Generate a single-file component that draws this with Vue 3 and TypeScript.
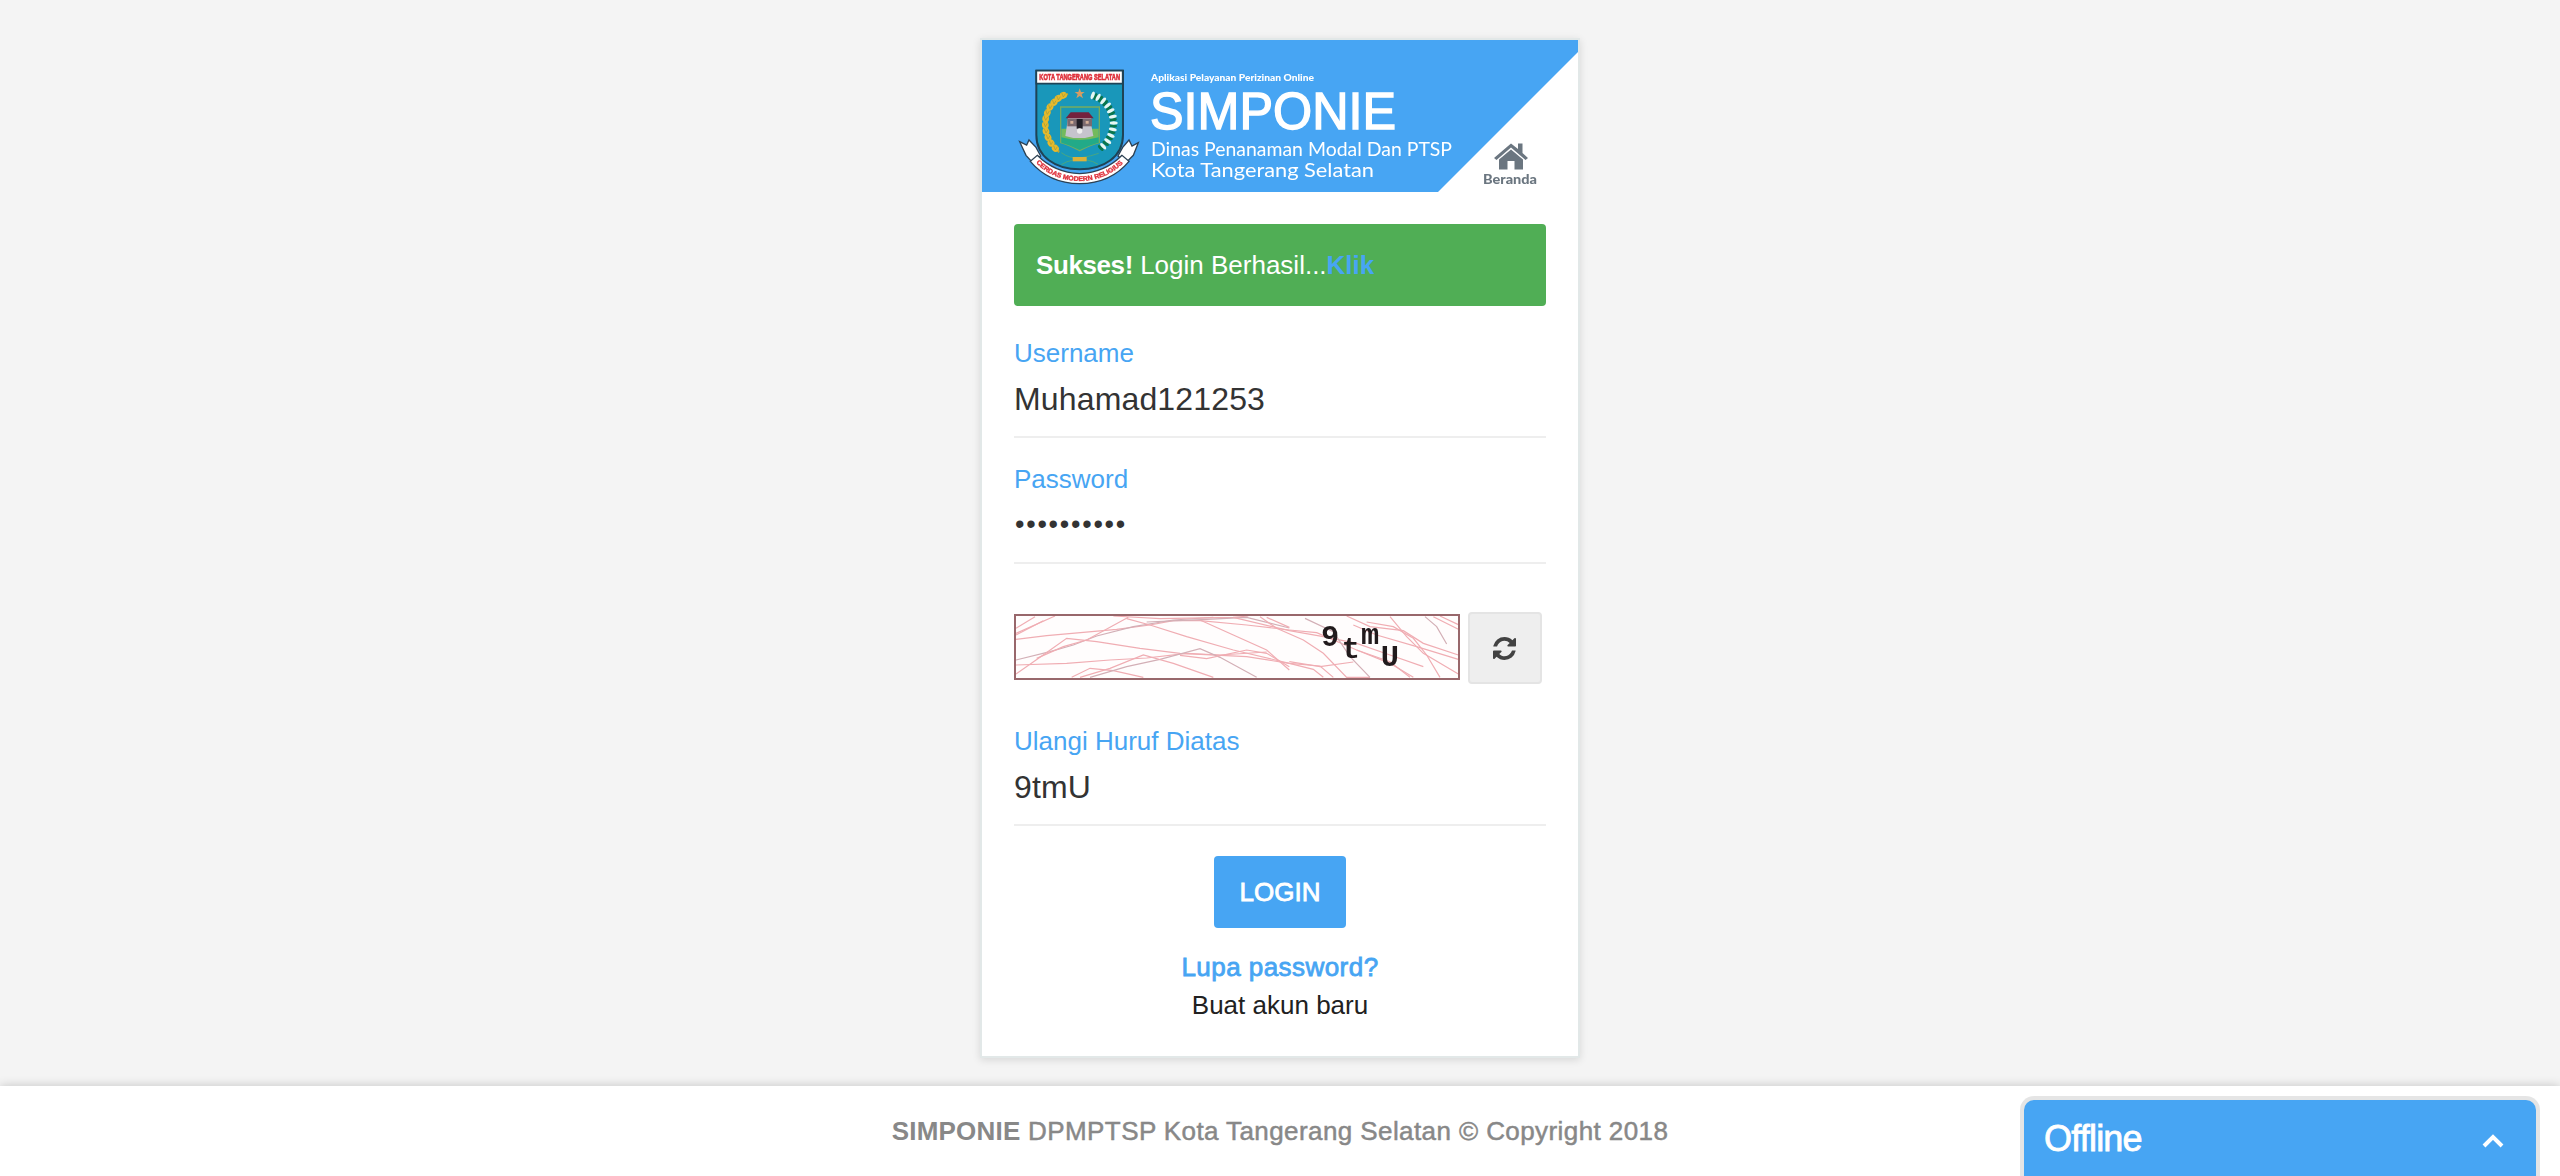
<script setup lang="ts">
import { ref } from 'vue'

const username = ref('Muhamad121253')
const password = ref('tangsel123')
const captcha = ref('9tmU')

interface Leaf {
  x: number
  y: number
  r: number
}

// Wheat ears on the left of the crest and cotton leaves on the right
const wheat: Leaf[] = [
  { x: 160, y: 136, r: 65 }, { x: 145, y: 145, r: 55 }, { x: 132, y: 157, r: 45 },
  { x: 120, y: 171, r: 30 }, { x: 112, y: 188, r: 18 }, { x: 107, y: 206, r: 8 },
  { x: 106, y: 225, r: -5 }, { x: 108, y: 244, r: -15 }, { x: 114, y: 262, r: -25 },
  { x: 123, y: 279, r: -35 }, { x: 136, y: 295, r: -45 },
]
const cotton: Leaf[] = [
  { x: 250, y: 137, r: 20 }, { x: 266, y: 143, r: 30 }, { x: 281, y: 154, r: 40 },
  { x: 294, y: 168, r: 52 }, { x: 303, y: 184, r: 65 }, { x: 309, y: 202, r: 78 },
  { x: 311, y: 221, r: 90 }, { x: 308, y: 240, r: 102 }, { x: 302, y: 258, r: 115 },
  { x: 292, y: 275, r: 125 }, { x: 278, y: 290, r: 138 },
]

const noise: string[] = [
  '48,85 105,50', '48,100 165,48', '48,105 130,62',
  '48,118 140,107 250,97 350,88 450,75 520,62 600,62 740,75 868,90 950,98 1070,150 1170,185 1230,232',
  '48,180 150,155 220,135 290,108 400,80 520,60 640,52',
  '48,222 120,172 200,115 290,125 420,145 540,160 740,170 868,190 960,198 1000,232',
  '110,175 190,140 260,120 385,52',
  '48,195 200,190 330,180 440,174 560,160 660,165 800,156',
  '215,232 270,205 340,212 430,232',
  '270,232 380,200 480,178 600,146 660,172 770,232',
  '240,232 330,205 430,165 520,190 640,232',
  '380,56 450,75 560,110 700,150 868,190 940,208 970,232',
  '600,60 700,105 800,150 868,210',
  '340,48 480,56 700,52 745,48',
  '440,66 620,58 740,52 868,84',
  '780,50 830,85 910,120 970,160 1040,232 1110,232',
  '700,52 868,92 970,110 1070,130 1170,165 1270,200',
  '800,52 868,82', '540,166 620,176 740,150 800,160 868,200',
  '915,55 1000,95 1050,170 1110,232',
  '1040,48 1110,80 1210,92 1270,130 1375,165',
  '1060,75 1130,105 1250,140 1375,178',
  '1100,66 1180,80 1240,115 1280,165 1320,232',
  '1170,50 1220,110 1270,160 1375,222',
  '1275,50 1310,80 1340,132', '1300,50 1375,88', '1320,48 1375,74',
  '868,185 960,200 1060,186', '1070,150 1170,190 1240,232',
]
</script>

<template>
  <div class="page">
    <main class="card">
      <svg class="banner" viewBox="0 0 596 152">
        <rect width="596" height="152" fill="#47a5f3" />
        <path d="M596 12V152H456Z" fill="#fff" />
        <g class="soft">
          <g transform="translate(28 10) scale(.33333)">
            <!-- ribbon tails -->
            <path d="M29 275L50 285L57 270L78 292L92 318L68 338L48 316Z" fill="#fff" stroke="#2c4153" stroke-width="4" />
            <path d="M385 278L366 288L357 270L338 292L324 318L348 338L370 316Z" fill="#fff" stroke="#2c4153" stroke-width="4" />
            <!-- shield -->
            <path d="M79 62H339V255C339 320 282 358 209 358C136 358 79 320 79 255Z" fill="#1997ba" stroke="#1f4356" stroke-width="6" />
            <path d="M79 62H338V101H79Z" fill="#fff" stroke="#1f4356" stroke-width="5" />
            <text x="88" y="91" class="crest-title" textLength="242" lengthAdjust="spacingAndGlyphs">KOTA TANGERANG SELATAN</text>
            <path d="M209 115L213 126H224L215 133L219 145L209 138L199 145L203 133L194 126H205Z" fill="#d49c62" />
            <path d="M174 132C120 150 98 190 107 240Q115 288 148 306" fill="none" stroke="#b8a635" stroke-width="7" />
            <ellipse v-for="l in wheat" :key="'w' + l.y" :cx="l.x" :cy="l.y" rx="10" ry="11" fill="#e6b92b" :transform="`rotate(${l.r} ${l.x} ${l.y})`" />
            <path v-for="l in wheat" :key="'v' + l.y" :d="`M${l.x - 5} ${l.y - 8}L${l.x} ${l.y + 5}L${l.x + 6} ${l.y - 5}`" fill="none" stroke="#9d9c3e" stroke-width="2" />
            <g v-for="l in cotton" :key="'c' + l.y" :transform="`translate(${l.x} ${l.y}) rotate(${l.r})`">
              <ellipse cx="7" cy="1" rx="5" ry="11" fill="#08764c" />
              <ellipse cx="-2" cy="0" rx="5" ry="12" fill="#e5f7f2" />
            </g>
            <!-- inner emblem -->
            <path d="M152 171H268V278Q243 284 209 302Q175 284 152 278Z" fill="#1c98b2" stroke="#75ac60" stroke-width="4" />
            <path d="M154 236H266V278Q243 284 209 300Q175 284 154 278Z" fill="#73ba5d" />
            <path d="M154 262Q209 278 266 262V278Q243 284 209 300Q175 284 154 278Z" fill="#22aa88" />
            <path d="M174 204H244V226L250 258L225 264H190L166 258Z" fill="#c6c4cd" />
            <path d="M172 206H246V229H172Z" fill="#7b6a70" />
            <path d="M182 187H236L251 205H167Z" fill="#74223e" />
            <path d="M200 207H218V236H200Z" fill="#221f28" />
            <circle cx="209" cy="243" r="8" fill="#eee" />
            <path d="M181 217h9M227 217h9" stroke="#d4af99" stroke-width="8" />
            <path d="M154 308Q178 326 209 324Q246 318 266 310M154 344Q171 333 187 331M230 330Q250 333 264 343" fill="none" stroke="#49a681" stroke-width="3" />
            <rect x="188" y="321" width="42" height="13" fill="#dbb13a" />
            <!-- motto ribbon -->
            <path d="M82 316Q133 368 209 371Q285 368 336 316L357 334Q302 400 209 401Q116 400 61 334Z" fill="#fff" stroke="#2c4153" stroke-width="4" />
            <path id="motto" d="M74 334Q125 391 209 393Q293 391 344 334" fill="none" />
            <text class="crest-motto"><textPath href="#motto" startOffset="6" textLength="290" lengthAdjust="spacingAndGlyphs">CERDAS MODERN RELIGIUS</textPath></text>
          </g>
          <text x="169" y="40.500" class="tagline" textLength="163" lengthAdjust="spacingAndGlyphs">Aplikasi Pelayanan Perizinan Online</text>
          <text x="168" y="89" class="brand" textLength="246" lengthAdjust="spacingAndGlyphs">SIMPONIE</text>
          <text x="169" y="116" class="agency" textLength="301" lengthAdjust="spacingAndGlyphs">Dinas Penanaman Modal Dan PTSP</text>
          <text x="169" y="136.500" class="agency" textLength="223" lengthAdjust="spacingAndGlyphs">Kota Tangerang Selatan</text>
          <!-- home link -->
          <path d="M512 118L529 103.500L536 109V103.500H540.500V113L546 118L543.500 120L529 107.500L514.500 120Z" fill="#6b7680" />
          <path d="M517 119.500L529 109.500L541 119.500V129.500H532.500V121H525.500V129.500H517Z" fill="#6b7680" />
          <text x="501" y="144" class="home" textLength="54" lengthAdjust="spacingAndGlyphs">Beranda</text>
        </g>
      </svg>

      <form class="form" @submit.prevent>
        <div class="alert"><strong>Sukses!</strong> Login Berhasil...<a class="alert-link">Klik</a></div>

        <label class="field">
          <span class="label">Username</span>
          <input v-model="username" class="input" type="text" />
        </label>
        <label class="field next">
          <span class="label">Password</span>
          <input v-model="password" class="input password" type="password" />
        </label>

        <div class="captcha-row">
          <svg class="captcha" viewBox="42 42 1338 198">
            <rect x="42" y="42" width="1338" height="198" fill="#fffdfd" />
            <g class="captcha-soft">
              <polyline v-for="(p, i) in noise" :key="i" :points="p" fill="none" :stroke="i % 5 === 4 ? '#d3afb6' : '#f0adb3'" stroke-width="3.600" />
              <g class="captcha-text">
                <text x="963" y="137">9</text>
                <text x="1025" y="175">t</text>
                <text x="1083" y="132">m</text>
                <text x="1142" y="197">U</text>
              </g>
            </g>
            <rect x="45" y="45" width="1332" height="192" fill="none" stroke="#98676b" stroke-width="6" />
          </svg>
          <button class="refresh" type="button" aria-label="Refresh">
            <svg viewBox="0 0 1536 1536" width="23" height="23">
              <path fill="#424242" d="M1511 928q0 5-1 7-64 268-268 434.500T764 1536q-146 0-282.500-55T238 1324l-129 129q-19 19-45 19t-45-19-19-45V960q0-26 19-45t45-19h448q26 0 45 19t19 45-19 45l-137 137q71 66 161 102t187 36q134 0 250-65t186-179q11-17 53-117 8-23 30-23h192q13 0 22.500 9.500t9.500 22.500zm25-800v448q0 26-19 45t-45 19h-448q-26 0-45-19t-19-45 19-45l138-138Q969 256 768 256q-134 0-250 65T332 500q-11 17-53 117-8 23-30 23H50q-13 0-22.500-9.500T18 608v-7q65-268 270-434.500T768 0q146 0 284 55.500T1297 212l130-129q19-19 45-19t45 19 19 45z" />
            </svg>
          </button>
        </div>

        <label class="field">
          <span class="label">Ulangi Huruf Diatas</span>
          <input v-model="captcha" class="input" type="text" />
        </label>

        <button class="login" type="submit">LOGIN</button>
        <a class="forgot">Lupa password?</a>
        <a class="signup">Buat akun baru</a>
      </form>
    </main>

    <footer class="footer"><span><strong>SIMPONIE</strong> DPMPTSP Kota Tangerang Selatan © Copyright 2018</span></footer>

    <aside class="chat">
      <span class="chat-title">Offline</span>
      <svg class="chat-arrow" viewBox="0 0 24 16"><path d="M3 13L12 4L21 13" fill="none" stroke="#fff" stroke-width="4" /></svg>
    </aside>
  </div>
</template>

<style>
body {
  margin: 0;
  background: #f4f4f4;
}
</style>

<style scoped>
.page {
  position: relative;
  display: flex;
  flex-direction: column;
  align-items: center;
  justify-content: space-between;
  box-sizing: border-box;
  height: 1176px;
  padding-top: 38px;
  overflow: hidden;
  background: #f4f4f4;
  font-family: "Liberation Sans", Arial, sans-serif;
  font-size: 26px;
  color: #212121;
}
.card {
  box-sizing: border-box;
  width: 600px;
  height: 1020px;
  border: 2px solid #e2e8e8;
  background: #fff;
  box-shadow: 0 2px 8px rgba(0, 0, 0, 0.12);
}
.banner {
  display: block;
  width: 596px;
  height: 152px;
}
.soft {
  filter: blur(0.6px);
}
.crest-title {
  font: bold 27px "Liberation Sans", sans-serif;
  fill: #df303a;
  stroke: #df303a;
  stroke-width: 2px;
}
.crest-motto {
  font: bold 20px "Liberation Sans", sans-serif;
  fill: #df303a;
  stroke: #df303a;
  stroke-width: 1px;
}
.tagline {
  font: 900 10px Lato, sans-serif;
  fill: #fff;
}
.brand {
  font: 400 51px "Liberation Sans", sans-serif;
  fill: #fff;
  stroke: #fff;
  stroke-width: 1.4px;
}
.agency {
  font: 400 18.5px Lato, sans-serif;
  fill: #fff;
}
.home {
  font: 900 13px Lato, sans-serif;
  fill: #6b7680;
}
.form {
  display: flex;
  flex-direction: column;
  padding: 32px;
}
.alert {
  height: 82px;
  margin-bottom: 27px;
  padding: 0 22px;
  box-sizing: border-box;
  border-radius: 4px;
  background: #50ae55;
  color: #fff;
  line-height: 82px;
}
.alert strong {
  letter-spacing: -0.4px;
}
.alert-link {
  color: #47a5f3;
  font-weight: bold;
}
.field {
  display: flex;
  flex-direction: column;
  height: 103px;
  border-bottom: 2px solid #eee;
}
.next {
  margin-top: 21px;
}
.label {
  height: 40px;
  color: #47a5f3;
  line-height: 40px;
}
.input {
  box-sizing: border-box;
  height: 52px;
  padding: 0;
  border: 0;
  outline: 0;
  background: transparent;
  color: #333;
  font: 32px/52px "Liberation Sans", Arial, sans-serif;
  letter-spacing: 0.15px;
}
.password {
  padding: 0 0 2px 1px;
  font-size: 27px;
  line-height: 50px;
  letter-spacing: 1.75px;
}
.captcha-row {
  display: flex;
  gap: 8px;
  margin: 48px 0 37px;
}
.captcha {
  width: 446px;
  height: 66px;
  margin-top: 2px;
}
.captcha-soft {
  filter: blur(1.2px);
}
.captcha-text {
  font: bold 91px "Liberation Mono", monospace;
  fill: #211a1c;
}
.refresh {
  display: flex;
  align-items: center;
  justify-content: center;
  box-sizing: border-box;
  width: 74px;
  height: 72px;
  padding: 0 2px 0 0;
  border: 2px solid #e4e4e4;
  border-radius: 4px;
  background: #eee;
}
.login {
  align-self: center;
  width: 132px;
  height: 72px;
  margin: 30px 0 20px;
  padding: 0;
  border: 0;
  border-radius: 4px;
  background: #47a5f3;
  color: #fff;
  font: 26px/72px "Liberation Sans", Arial, sans-serif;
  -webkit-text-stroke: 0.8px currentColor;
}
.forgot,
.signup {
  height: 38px;
  line-height: 38px;
  text-align: center;
}
.forgot {
  color: #47a5f3;
  letter-spacing: 0.45px;
  -webkit-text-stroke: 0.8px currentColor;
}
.footer {
  display: flex;
  align-items: center;
  justify-content: center;
  width: 100%;
  height: 90px;
  background: #fff;
  box-shadow: 0 0 10px rgba(0, 0, 0, 0.2);
  color: #888;
  letter-spacing: 0.41px;
  -webkit-text-stroke: 0.5px currentColor;
}
.footer strong {
  letter-spacing: 0.2px;
  -webkit-text-stroke: 0;
}
.chat {
  position: absolute;
  right: 24px;
  bottom: 0;
  display: flex;
  align-items: center;
  justify-content: space-between;
  box-sizing: border-box;
  width: 512px;
  height: 76px;
  padding: 0 31px 0 20px;
  border-radius: 10px 10px 0 0;
  background: #47a5f3;
  box-shadow: 0 0 0 4px rgba(0, 0, 0, 0.1);
  color: #fff;
}
.chat-title {
  padding-top: 1px;
  font-size: 36px;
  letter-spacing: -0.8px;
  -webkit-text-stroke: 0.8px currentColor;
}
.chat-arrow {
  width: 24px;
  height: 16px;
  margin-top: 6px;
}
</style>
